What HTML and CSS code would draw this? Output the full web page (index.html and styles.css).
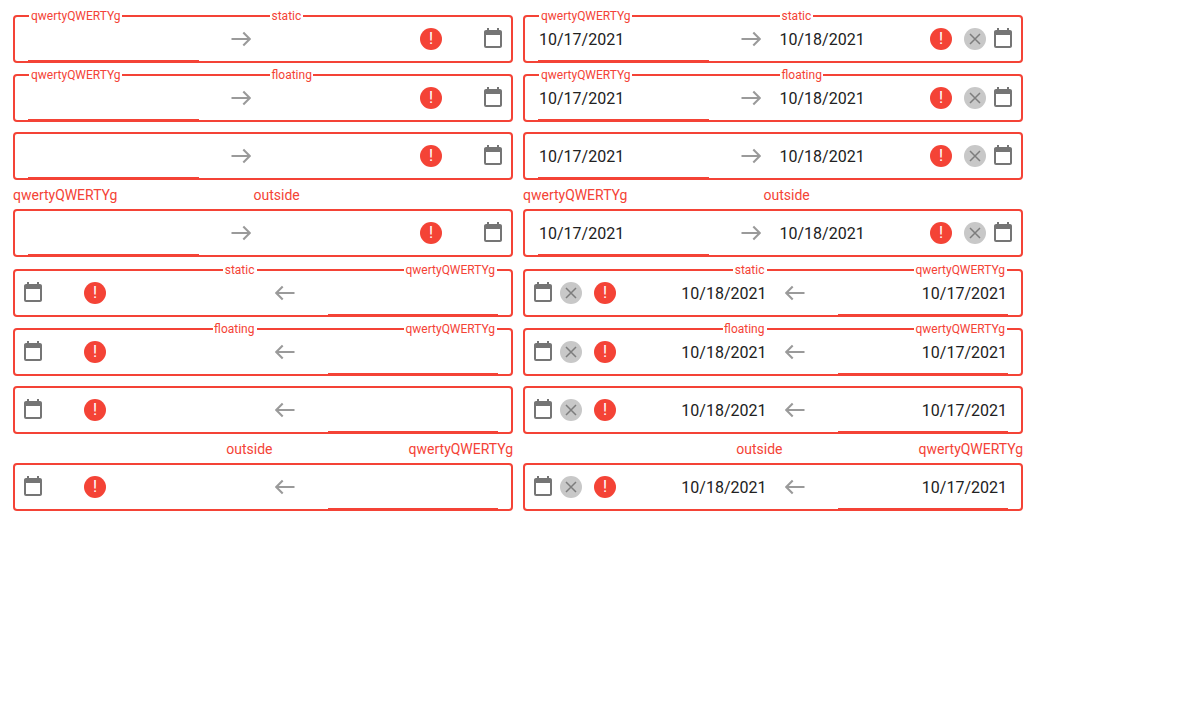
FILE: index.html
```html
<!DOCTYPE html>
<html lang="en">
<head>
<meta charset="utf-8">
<title>Date range box</title>
<link rel="stylesheet" href="styles.css">
</head>
<body>
<svg class="sprite" aria-hidden="true">
  <symbol id="arrow" viewBox="0 0 20 16"><path d="M0.5 8H18.7M12.3 1.5L18.8 8L12.3 14.5" fill="none" stroke="#9a9a9a" stroke-width="2.1"/></symbol>
  <symbol id="calendar" viewBox="0 0 24 24"><path fill="#757575" d="M19 3h-1V1h-2v2H8V1H6v2H5c-1.11 0-1.99.9-1.99 2L3 19a2 2 0 0 0 2 2h14c1.1 0 2-.9 2-2V5c0-1.1-.9-2-2-2zm0 16H5V8h14v11z"/></symbol>
  <symbol id="clear" viewBox="0 0 22 22"><circle cx="11" cy="11" r="11" fill="#c8c8c8"/><path d="M6 6L16 16M16 6L6 16" stroke="#7d7d7d" stroke-width="1.5"/></symbol>
</svg>
<main class="grid" id="grid"></main>
<script src="main.js"></script>
</body>
</html>
```
FILE: styles.css
```css
body {
  margin: 0;
  padding: 13px;
  background: #fff;
  color: #212121;
  font: 16px/22px Roboto, sans-serif;
}
.sprite { display: none; }
.grid {
  display: grid;
  grid-template-columns: 500px 500px;
  gap: 10px;
}
.cell.static { padding-top: 2px; }
.cell.floating { padding-top: 1px; }
.outer-labels {
  display: flex;
  height: 19px;
  color: #f44336;
  font-size: 14px;
  line-height: 11px;
}
.outer-labels span:first-child { width: 240.5px; }
.field {
  position: relative;
  box-sizing: border-box;
  height: 48px;
  display: flex;
  align-items: center;
  border: 2px solid #f44336;
  border-radius: 4px;
  padding-inline: 13px 6px;
}
.label {
  position: absolute;
  top: -8px;
  padding-inline: 2px 1.5px;
  background: #fff;
  color: #f44336;
  font-size: 12px;
  line-height: 14px;
}
.label.start { inset-inline-start: 14px; }
.label.end { inset-inline-start: 254.5px; }
.input {
  box-sizing: border-box;
  height: 44px;
  line-height: 46px;
  padding-inline-start: 1px;
}
.input.start { width: 170.5px; position: relative; }
.input.start::after {
  content: "";
  position: absolute;
  inset-inline: 0;
  bottom: -1px;
  height: 2px;
  background: #f44336;
}
.arrow { width: 20px; height: 16px; margin-inline: 32.5px 17px; }
.input.end { flex: 1; padding-inline-start: 1.5px; }
[dir="rtl"] .arrow { transform: scaleX(-1); }
.error {
  width: 22px;
  height: 22px;
  border-radius: 50%;
  background: #f44336;
  color: #fff;
  text-align: center;
}
.clear { width: 22px; height: 22px; margin-inline: 12px 5px; }
.clear.hidden { visibility: hidden; }
.calendar { width: 24px; height: 24px; }
```
FILE: main.js
```js
const icon = (name, extra = "") =>
  `<svg class="${name}${extra}"><use href="#${name}"/></svg>`;

function cell(dir, mode, filled) {
  const labels = mode === "static" || mode === "floating"
    ? `<span class="label start">qwertyQWERTYg</span><span class="label end">${mode}</span>` : "";
  const outer = mode === "outside"
    ? `<div class="outer-labels"><span>qwertyQWERTYg</span><span>outside</span></div>` : "";
  return `<div class="cell ${mode}" dir="${dir}">${outer}
    <div class="field">${labels}
      <div class="input start">${filled ? "10/17/2021" : ""}</div>
      ${icon("arrow")}
      <div class="input end">${filled ? "10/18/2021" : ""}</div>
      <div class="error"><bdi>!</bdi></div>
      ${icon("clear", filled ? "" : " hidden")}
      ${icon("calendar")}
    </div></div>`;
}

document.getElementById("grid").innerHTML = ["ltr", "rtl"].flatMap(dir =>
  ["static", "floating", "hidden", "outside"].flatMap(mode =>
    [false, true].map(filled => cell(dir, mode, filled)))).join("");
```
